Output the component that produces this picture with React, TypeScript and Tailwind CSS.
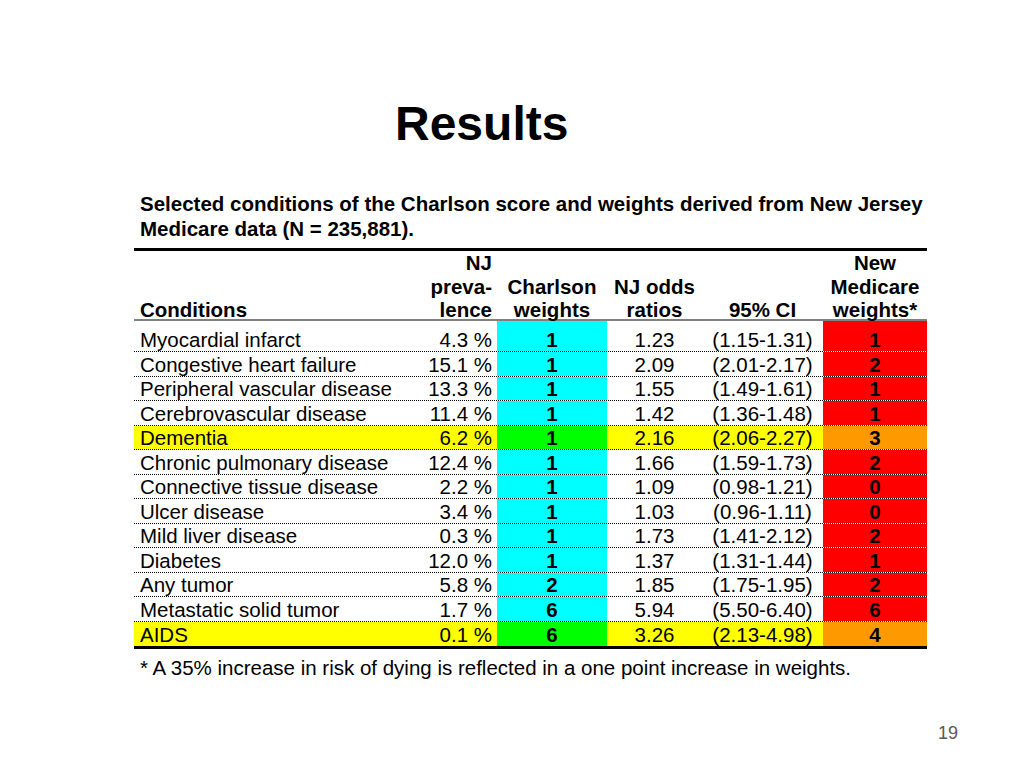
const CYAN = "bg-[#00ffff]";

type Row = {
  name: string;
  prev: string;
  charlson: string;
  odds: string;
  ci: string;
  medicare: string;
  hl?: boolean;
};

const rows: Row[] = [
  { name: "Myocardial infarct", prev: "4.3 %", charlson: "1", odds: "1.23", ci: "(1.15-1.31)", medicare: "1" },
  { name: "Congestive heart failure", prev: "15.1 %", charlson: "1", odds: "2.09", ci: "(2.01-2.17)", medicare: "2" },
  { name: "Peripheral vascular disease", prev: "13.3 %", charlson: "1", odds: "1.55", ci: "(1.49-1.61)", medicare: "1" },
  { name: "Cerebrovascular disease", prev: "11.4 %", charlson: "1", odds: "1.42", ci: "(1.36-1.48)", medicare: "1" },
  { name: "Dementia", prev: "6.2 %", charlson: "1", odds: "2.16", ci: "(2.06-2.27)", medicare: "3", hl: true },
  { name: "Chronic pulmonary disease", prev: "12.4 %", charlson: "1", odds: "1.66", ci: "(1.59-1.73)", medicare: "2" },
  { name: "Connective tissue disease", prev: "2.2 %", charlson: "1", odds: "1.09", ci: "(0.98-1.21)", medicare: "0" },
  { name: "Ulcer disease", prev: "3.4 %", charlson: "1", odds: "1.03", ci: "(0.96-1.11)", medicare: "0" },
  { name: "Mild liver disease", prev: "0.3 %", charlson: "1", odds: "1.73", ci: "(1.41-2.12)", medicare: "2" },
  { name: "Diabetes", prev: "12.0 %", charlson: "1", odds: "1.37", ci: "(1.31-1.44)", medicare: "1" },
  { name: "Any tumor", prev: "5.8 %", charlson: "2", odds: "1.85", ci: "(1.75-1.95)", medicare: "2" },
  { name: "Metastatic solid tumor", prev: "1.7 %", charlson: "6", odds: "5.94", ci: "(5.50-6.40)", medicare: "6" },
  { name: "AIDS", prev: "0.1 %", charlson: "6", odds: "3.26", ci: "(2.13-4.98)", medicare: "4", hl: true },
];

// column widths: 281 / 82 / 110 / 95 / 121 / 104
const COLS = "grid grid-cols-[281px_82px_110px_95px_121px_104px]";

function DataRow({ row, first, last }: { row: Row; first: boolean; last: boolean }) {
  const bg = row.hl ? "bg-[#ffff00]" : "bg-white";
  return (
    <div
      className={`${COLS} ${first ? "h-[31px]" : "h-[24.5px]"} ${
        last ? "" : "border-b border-dotted border-black"
      } leading-[23px]`}
    >
      <div className={`${bg} flex items-end pl-[6px]`}>{row.name}</div>
      <div className={`${bg} flex items-end justify-end pr-[5px]`}>{row.prev}</div>
      <div className={`${row.hl ? "bg-[#00ff00]" : CYAN} flex items-end justify-center font-bold`}>
        {row.charlson}
      </div>
      <div className={`${bg} flex items-end justify-center`}>{row.odds}</div>
      <div className={`${bg} flex items-end justify-center`}>{row.ci}</div>
      <div
        className={`${row.hl ? "bg-[#ff9900]" : "bg-[#ff0000]"} flex items-end justify-center font-bold`}
      >
        {row.medicare}
      </div>
    </div>
  );
}

export default function App() {
  return (
    <div className="w-[1024px] h-[768px] bg-white text-black font-['Liberation_Sans',Arial,sans-serif] overflow-hidden">
      <h1 className="pt-[100px] pl-[395px] text-[48px] leading-none font-bold">Results</h1>

      <div className="pl-[134px] pt-[43px]">
        <p className="pl-[6px] w-[800px] text-[20.5px] leading-[25px] font-bold">
          Selected conditions of the Charlson score and weights derived from New Jersey Medicare data (N =
          235,881).
        </p>

        <div className="mt-[7px] w-[793px] border-t-[3px] border-black text-[20.5px]">
          {/* header */}
          <div className={`${COLS} h-[70px] border-b-2 border-[#808080] font-bold leading-[23.5px]`}>
            <div className="flex items-end pl-[6px]">Conditions</div>
            <div className="flex items-end justify-end pr-[5px] text-right">
              NJ
              <br />
              preva-
              <br />
              lence
            </div>
            <div className="flex items-end justify-center text-center">
              Charlson
              <br />
              weights
            </div>
            <div className="flex items-end justify-center text-center">
              NJ odds
              <br />
              ratios
            </div>
            <div className="flex items-end justify-center text-center">95% CI</div>
            <div className="flex items-end justify-center text-center">
              New
              <br />
              Medicare
              <br />
              weights*
            </div>
          </div>

          {rows.map((r, i) => (
            <DataRow key={r.name} row={r} first={i === 0} last={i === rows.length - 1} />
          ))}

          <div className="border-t-[3px] border-black" />
        </div>

        <p className="pl-[6px] pt-[7px] text-[20.5px] leading-[23px]">
          * A 35% increase in risk of dying is reflected in a one point increase in weights.
        </p>
      </div>

      <div className="flex justify-end pr-[66px] pt-[43px] text-[18px] leading-[22px] text-[#595959]">19</div>
    </div>
  );
}
